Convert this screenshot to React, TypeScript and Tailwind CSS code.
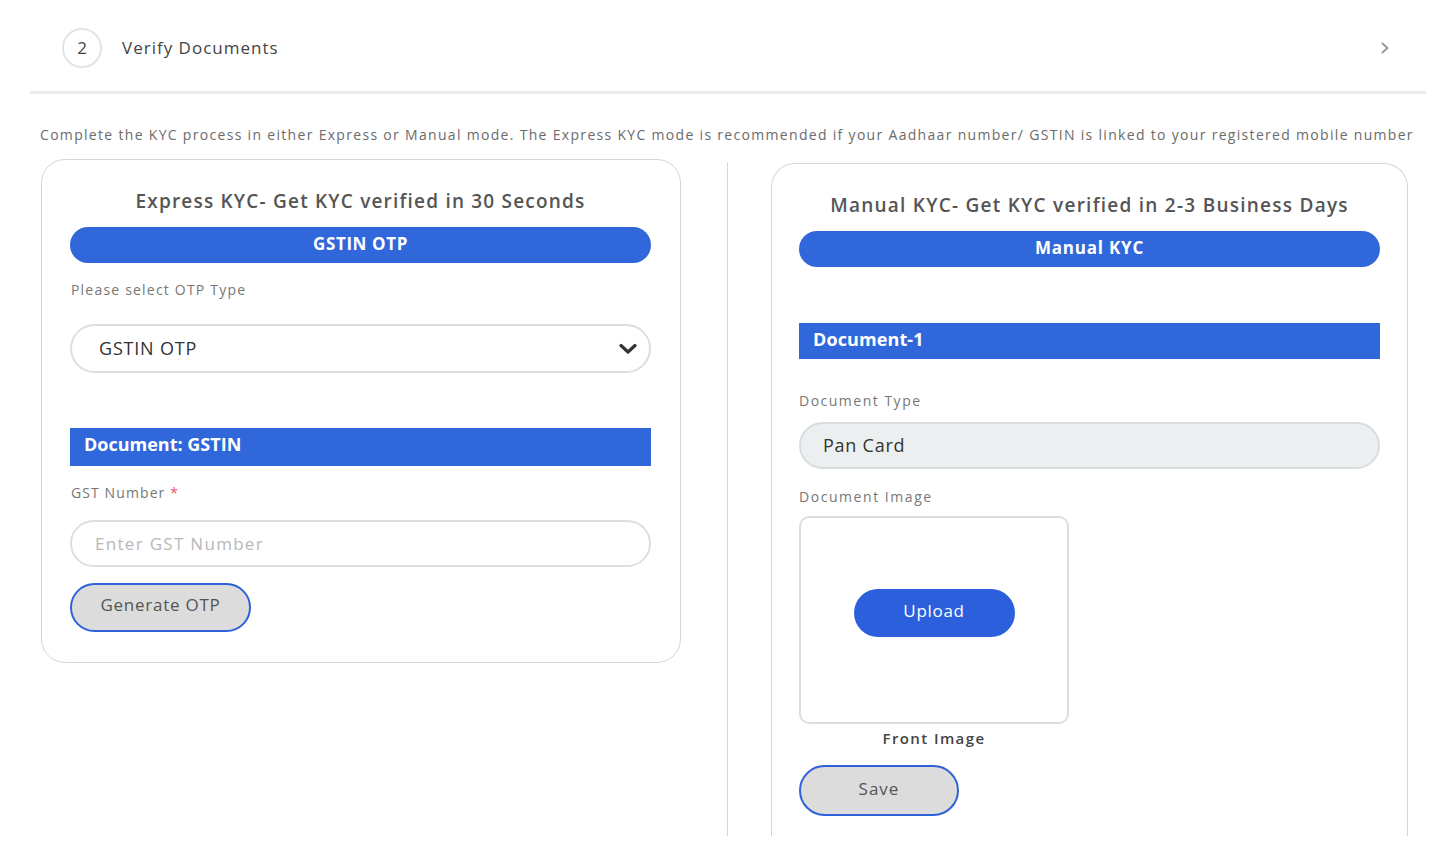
import React from "react";

function ChevronDown() {
  return (
    <svg width="18" height="12" viewBox="0 0 18 12" fill="none">
      <path d="M2 2.5 L9 9 L16 2.5" stroke="#333" strokeWidth="3.2" strokeLinecap="round" strokeLinejoin="round" />
    </svg>
  );
}

function ChevronRight() {
  return (
    <svg width="10" height="12" viewBox="0 0 10 12" fill="none">
      <path d="M2.5 1.5 L7.5 6 L2.5 10.5" stroke="#9a9a9a" strokeWidth="2" strokeLinecap="round" strokeLinejoin="round" />
    </svg>
  );
}

export default function App() {
  return (
    <div
      className="w-[1454px] h-[856px] bg-white overflow-hidden text-[#555]"
      style={{ fontFamily: '"Open Sans", "Noto Sans", sans-serif' }}
    >
      <div className="mx-[30px] w-[1396px]">
        {/* Header */}
        <div className="h-[91px] flex items-center pl-[32px] pr-[36px] pt-[5px]">
          <div className="w-[40px] h-[40px] rounded-full border-2 border-[#e4e4e4] flex items-center justify-center text-[17px] text-[#444]">
            2
          </div>
          <div className="ml-[20px] text-[17px] text-[#444] tracking-[1px]">Verify Documents</div>
          <div className="ml-auto flex items-center">
            <ChevronRight />
          </div>
        </div>
        <div className="h-[3px] bg-[#ebebeb]" />

        {/* Intro */}
        <div className="mt-[31px] pl-[10px] text-[14px] leading-[20px] text-[#6b6b6b] whitespace-nowrap tracking-[1.31px]">
          Complete the KYC process in either Express or Manual mode. The Express KYC mode is recommended if your Aadhaar number/ GSTIN is linked to your registered mobile number
        </div>

        {/* Columns */}
        <div className="mt-[14px] flex h-[677px] overflow-hidden">
          {/* Left card */}
          <div className="ml-[11px] w-[640px] self-start border border-[#d3d6d9] rounded-[24px] pt-[29px] pl-[28px] pr-[29px] pb-[30px]">
            <div className="text-center text-[19px] leading-[24px] font-semibold text-[#555] tracking-[1.2px] whitespace-nowrap">
              Express KYC- Get KYC verified in 30 Seconds
            </div>
            <div className="mt-[14px] h-[36px] rounded-full bg-[#3068db] flex items-center justify-center text-white text-[17px] font-bold tracking-[0.6px] pb-[3px]">
              GSTIN OTP
            </div>
            <div className="mt-[17px] text-[14px] leading-[20px] text-[#777] pl-[1px] tracking-[1.2px]">Please select OTP Type</div>
            <div className="mt-[24px] h-[49px] rounded-full border-2 border-[#dcdfe2] flex items-center pl-[27px] pr-[12px] text-[18px] text-[#333]">
              <span className="tracking-[0.8px]">GSTIN OTP</span>
              <span className="ml-auto flex items-center">
                <ChevronDown />
              </span>
            </div>
            <div className="mt-[55px] h-[38px] bg-[#3068db] flex items-center pl-[14px] text-white text-[18px] font-bold pb-[5px]">
              Document: GSTIN
            </div>
            <div className="mt-[17px] text-[14px] leading-[20px] text-[#777] pl-[1px] tracking-[1.1px]">
              GST Number <span className="text-[#f0507a]">*</span>
            </div>
            <div className="mt-[17px] h-[47px] rounded-full border-2 border-[#dcdfe2] flex items-center pl-[23px] text-[17px] text-[#b8b8b8] tracking-[1.3px]">
              Enter GST Number
            </div>
            <div className="mt-[16px] w-[181px] h-[49px] rounded-full border-2 border-[#2f62d9] bg-[#dcdcdc] flex items-center justify-center text-[17px] text-[#555] pb-[5px] tracking-[0.75px]">
              Generate OTP
            </div>
          </div>

          {/* Divider */}
          <div className="ml-[46px] mt-[3px] w-px bg-[#d6d6d6] self-stretch" />

          {/* Right card */}
          <div className="ml-[43px] mt-[4px] w-[637px] border border-[#d3d6d9] rounded-t-[24px] border-b-0 pt-[29px] px-[27px] h-[800px] self-start">
            <div className="text-center text-[19px] leading-[24px] font-semibold text-[#555] tracking-[1.25px] whitespace-nowrap">
              Manual KYC- Get KYC verified in 2-3 Business Days
            </div>
            <div className="mt-[14px] h-[36px] rounded-full bg-[#3068db] flex items-center justify-center text-white text-[17px] font-bold tracking-[0.8px] pb-[3px]">
              Manual KYC
            </div>
            <div className="mt-[56px] h-[36px] bg-[#3068db] flex items-center pl-[14px] text-white text-[18px] font-bold tracking-[0.1px] pb-[4px]">
              Document-1
            </div>
            <div className="mt-[32px] text-[14px] leading-[20px] text-[#777] tracking-[1.5px]">Document Type</div>
            <div className="mt-[11px] h-[47px] rounded-full border-2 border-[#d9dcdf] bg-[#eceff0] flex items-center pl-[22px] text-[18px] text-[#333] tracking-[0.75px]">
              Pan Card
            </div>
            <div className="mt-[18px] text-[14px] leading-[20px] text-[#777] tracking-[1.55px]">Document Image</div>
            <div className="mt-[9px] w-[270px]">
              <div className="h-[208px] rounded-[10px] border-2 border-[#dcdfe2] flex items-center justify-center pb-[14px]">
                <div className="w-[161px] h-[48px] rounded-full bg-[#2b5fdc] flex items-center justify-center text-white text-[17px] pb-[4px] tracking-[0.7px]">
                  Upload
                </div>
              </div>
              <div className="mt-[4px] text-center text-[15px] leading-[20px] font-semibold text-[#444] tracking-[1.4px]">Front Image</div>
            </div>
            <div className="mt-[17px] w-[160px] h-[51px] rounded-full border-2 border-[#2f62d9] bg-[#dcdcdc] flex items-center justify-center text-[17px] text-[#555] pb-[4px] tracking-[1px]">
              Save
            </div>
          </div>
        </div>
      </div>
    </div>
  );
}
